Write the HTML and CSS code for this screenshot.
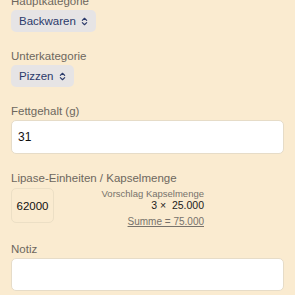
FILE: index.html
```html
<!DOCTYPE html>
<html lang="de">
<head>
    <meta charset="UTF-8">
    <meta name="viewport" content="width=device-width, initial-scale=1.0">
    <title>Eintrag bearbeiten</title>
    <link rel="stylesheet" href="styles.css">
</head>
<body>
    <div class="form">
        <div class="field">
            <div class="label">Hauptkategorie</div>
            <button class="picker">Backwaren
                <svg class="chev" viewBox="0 0 8 10" width="7" height="9"><path d="M1.5 3.8 4 1.3 6.5 3.8M1.5 6.2 4 8.7 6.5 6.2" fill="none" stroke="currentColor" stroke-width="1.3" stroke-linecap="round" stroke-linejoin="round"/></svg>
            </button>
        </div>

        <div class="field">
            <div class="label">Unterkategorie</div>
            <button class="picker">Pizzen
                <svg class="chev" viewBox="0 0 8 10" width="7" height="9"><path d="M1.5 3.8 4 1.3 6.5 3.8M1.5 6.2 4 8.7 6.5 6.2" fill="none" stroke="currentColor" stroke-width="1.3" stroke-linecap="round" stroke-linejoin="round"/></svg>
            </button>
        </div>

        <div class="field">
            <div class="label">Fettgehalt (g)</div>
            <div class="input tall">31</div>
        </div>

        <div class="field">
            <div class="label">Lipase-Einheiten / Kapselmenge</div>
            <div class="lipase">
                <div class="units">62000</div>
                <div class="hint">
                    <div class="hint-title">Vorschlag Kapselmenge</div>
                    <div class="hint-calc">3 ×&nbsp; 25.000</div>
                    <div class="hint-sum">Summe = 75.000</div>
                </div>
            </div>
        </div>

        <div class="field notiz">
            <div class="label">Notiz</div>
            <div class="input"></div>
        </div>
    </div>
</body>
</html>
```

FILE: styles.css
```css
body {
    margin: 0;
    background-color: #faebd0;
    font-family: "Liberation Sans", Arial, sans-serif;
    color: #1c1c1c;
}
.form {
    margin-top: -7px;
    padding: 0 11px;
    display: flex;
    flex-direction: column;
    gap: 16px;
}
.field {
    display: flex;
    flex-direction: column;
    align-items: stretch;
}
.notiz {
    margin-top: 2px;
}
.label {
    font-size: 11.5px;
    line-height: 17px;
    color: #6d675e;
}
.picker {
    align-self: flex-start;
    display: flex;
    align-items: center;
    gap: 5px;
    height: 22px;
    padding: 0 8px;
    border: none;
    border-radius: 5px;
    background-color: #e6e4e5;
    color: #2b3a6b;
    font-family: inherit;
    font-size: 11.5px;
}
.input {
    height: 33px;
    box-sizing: border-box;
    padding: 0 6px;
    display: flex;
    align-items: center;
    background: white;
    border: 1px solid #e6dcc8;
    border-radius: 5px;
    font-size: 12px;
    color: #111;
}
.input.tall {
    height: 34px;
}
.lipase {
    display: flex;
    align-items: flex-start;
    height: 35px;
    margin-top: 1px;
}
.units {
    width: 43px;
    height: 35px;
    box-sizing: border-box;
    display: flex;
    align-items: center;
    justify-content: center;
    border: 1px solid #ecdfc5;
    border-radius: 5px;
    font-size: 11.5px;
    color: #111;
}
.hint {
    width: 150px;
    text-align: right;
    display: flex;
    flex-direction: column;
}
.hint-title {
    font-size: 9.5px;
    line-height: 11px;
    color: #77726b;
}
.hint-calc {
    font-size: 10.5px;
    line-height: 12px;
}
.hint-sum {
    margin-top: 5px;
    font-size: 10px;
    line-height: 12px;
    color: #77726b;
    text-decoration: underline;
}
```
